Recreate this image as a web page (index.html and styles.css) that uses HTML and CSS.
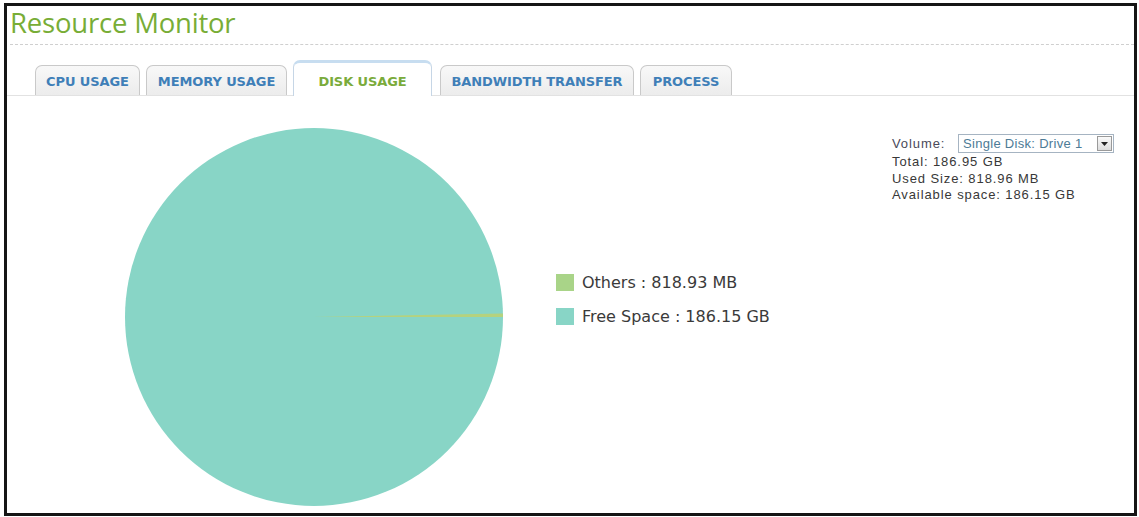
FILE: index.html
```html
<!DOCTYPE html>
<html>
<head>
<meta charset="utf-8">
<link rel="stylesheet" href="styles.css">
</head>
<body>
<div class="frame">
  <h1 class="title">Resource Monitor</h1>
  <div class="dots"></div>
  <div class="tabs">
    <div class="tab t-cpu">CPU USAGE</div>
    <div class="tab t-mem">MEMORY USAGE</div>
    <div class="tab active">DISK USAGE</div>
    <div class="tab t-bw">BANDWIDTH TRANSFER</div>
    <div class="tab t-proc">PROCESS</div>
  </div>
  <div class="content">
    <svg class="pie" width="380" height="380" viewBox="0 0 380 380">
      <circle cx="190" cy="190" r="189" fill="#88d5c6"/>
      <path d="M190 190 L379 190 L378.95 186.5 Z" fill="#b5d27e"/>
    </svg>
    <div class="legend">
      <div class="leg-row"><span class="sw sw-others"></span>Others : 818.93 MB</div>
      <div class="leg-row"><span class="sw sw-free"></span>Free Space : 186.15 GB</div>
    </div>
    <div class="info">
      <div class="vol-row">
        <span class="vol-label">Volume:</span>
        <div class="select"><span class="sel-text">Single Disk: Drive 1</span><span class="sel-btn"><svg width="7" height="4" viewBox="0 0 7 4"><path d="M0 0H7L3.5 4Z" fill="#222"/></svg></span></div>
      </div>
      <div class="line">Total: 186.95 GB</div>
      <div class="line">Used Size: 818.96 MB</div>
      <div class="line">Available space: 186.15 GB</div>
    </div>
  </div>
</div>
</body>
</html>
```

FILE: styles.css
```css
html, body {
  margin: 0;
  padding: 0;
  background: #ffffff;
}
.frame {
  box-sizing: border-box;
  margin: 3px 2px 0 4px;
  width: 1133px;
  height: 513px;
  border: 3px solid #151515;
  background: #ffffff;
  overflow: hidden;
}
.title {
  margin: 0;
  padding: 0 0 0 3px;
  height: 38px;
  font-family: "Open Sans", "Noto Sans", sans-serif;
  font-weight: 400;
  font-size: 27.5px;
  line-height: 34px;
  color: #78ad36;
  letter-spacing: -0.2px;
}
.dots {
  margin: 0 0 0 3px;
  border-top: 1px dashed #cfcfcf;
  height: 0;
}
.tabs {
  display: flex;
  align-items: flex-end;
  height: 50px;
  padding-left: 28px;
  border-bottom: 1px solid #e2e2e2;
}
.tab {
  box-sizing: border-box;
  height: 30px;
  margin-right: 6px;
  border: 1px solid #c9c9c9;
  border-bottom: none;
  border-radius: 7px 7px 0 0;
  background: linear-gradient(#f8f8f8, #ececec);
  font-family: "DejaVu Sans", Verdana, sans-serif;
  font-weight: bold;
  font-size: 13px;
  letter-spacing: -0.1px;
  color: #3f7fb8;
  display: flex;
  align-items: center;
  justify-content: center;
  padding-top: 2px;
}
.t-cpu { width: 105px; }
.t-mem { width: 141px; }
.t-bw { width: 194px; margin-left: 2px; }
.t-proc { width: 92px; }
.tab.active {
  width: 139px;
  height: 36px;
  border-color: #c6d6e6;
  border-top: 3px solid #c7ddf0;
  background: #ffffff;
  color: #7aab3b;
  padding-top: 4px;
  margin-bottom: -1px;
}
.content {
  display: flex;
  align-items: flex-start;
}
.pie {
  display: block;
  margin: 31px 0 0 117px;
  flex: none;
}
.legend {
  margin: 178px 0 0 52px;
  font-family: "DejaVu Sans", sans-serif;
  font-size: 16px;
  color: #3a3a3a;
}
.leg-row {
  display: flex;
  align-items: center;
  height: 17px;
  margin-bottom: 17px;
}
.sw {
  display: inline-block;
  width: 18px;
  height: 17px;
  margin-right: 8px;
}
.sw-others { background: #a9d488; }
.sw-free { background: #88d5c6; }
.info {
  margin: 38px 20px 0 auto;
  font-family: "Liberation Sans", Arial, sans-serif;
  font-size: 13px;
  letter-spacing: 0.9px;
  color: #383838;
}
.vol-row {
  display: flex;
  align-items: center;
  height: 19px;
  margin-bottom: 1px;
}
.vol-label {
  width: 66px;
  color: #4a4a5a;
}
.select {
  box-sizing: border-box;
  display: flex;
  align-items: center;
  height: 19px;
  width: 156px;
  border: 1px solid #a6b4c2;
  background: #ffffff;
  padding-left: 4px;
  white-space: nowrap;
}
.sel-text {
  flex: 1;
  color: #4d7b96;
  overflow: hidden;
  letter-spacing: 0.3px;
}
.sel-btn {
  box-sizing: border-box;
  flex: none;
  width: 15px;
  height: 15px;
  margin-right: 1px;
  border: 1px solid #9a9a9a;
  background: linear-gradient(#fafafa, #dcdcdc);
  display: flex;
  align-items: center;
  justify-content: center;
}
.line {
  line-height: 16.5px;
}
```
